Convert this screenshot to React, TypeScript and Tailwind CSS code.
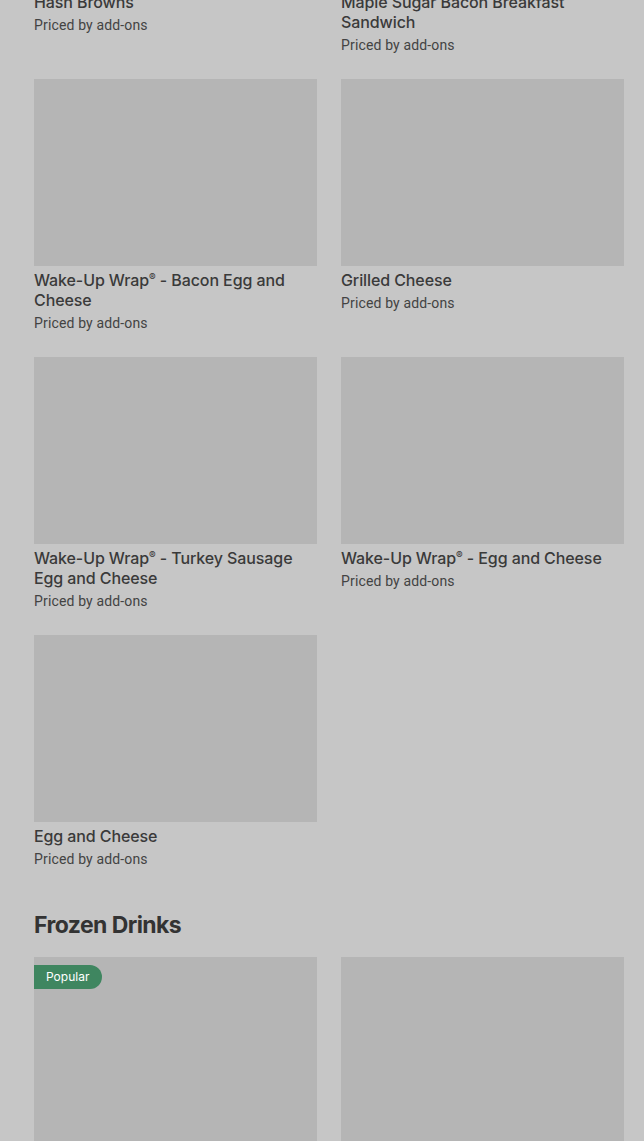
import React from "react";

type Item = { name: string; popular?: boolean };

const breakfast: Item[] = [
  { name: "Hash Browns" },
  { name: "Maple Sugar Bacon Breakfast Sandwich" },
  { name: "Wake-Up Wrap® - Bacon Egg and Cheese" },
  { name: "Grilled Cheese" },
  { name: "Wake-Up Wrap® - Turkey Sausage Egg and Cheese" },
  { name: "Wake-Up Wrap® - Egg and Cheese" },
  { name: "Egg and Cheese" },
];

const frozen: Item[] = [{ name: "Frozen Coffee", popular: true }, { name: "Frozen Chocolate" }];

// small raised ® like the reference
function Title({ text }: { text: string }) {
  const parts = text.split("®");
  return (
    <>
      {parts.map((p, i) => (
        <React.Fragment key={i}>
          {p}
          {i < parts.length - 1 && <span className="relative -top-[5px] text-[10px] leading-[0]">®</span>}
        </React.Fragment>
      ))}
    </>
  );
}

function ItemCard({ item }: { item: Item }) {
  return (
    <div className="flex flex-col">
      <div className="relative h-[187px] bg-[#b5b5b5]">
        {item.popular && (
          <span className="absolute left-0 top-2 h-6 pl-3 pr-[13px] flex items-center rounded-r-full bg-[#3f8660] text-white text-[12px] leading-none font-['Inter',sans-serif]">
            Popular
          </span>
        )}
      </div>
      <div className="mt-1 text-[16px] leading-5 font-medium tracking-[-0.1px] text-[#3a3a3a] font-['Inter',sans-serif]">
        <Title text={item.name} />
      </div>
      <div className="mt-[3px] text-[14px] leading-5 text-[#434343] font-['Roboto',sans-serif] tracking-[0.15px]">
        Priced by add-ons
      </div>
    </div>
  );
}

export default function App() {
  return (
    <div className="min-h-screen bg-[#c6c6c6] overflow-hidden font-['Roboto',sans-serif]">
      <div className="mt-[-199px] pl-[34px] pr-5">
        <div className="grid grid-cols-2 gap-x-6 gap-y-6">
          {breakfast.map((it) => (
            <ItemCard key={it.name} item={it} />
          ))}
        </div>
        <h2 className="mt-10 mb-4 text-[23px] leading-8 font-bold tracking-tight text-[#333] font-['Inter',sans-serif]">
          Frozen Drinks
        </h2>
        <div className="grid grid-cols-2 gap-x-6 gap-y-6">
          {frozen.map((it) => (
            <ItemCard key={it.name} item={it} />
          ))}
        </div>
      </div>
    </div>
  );
}
